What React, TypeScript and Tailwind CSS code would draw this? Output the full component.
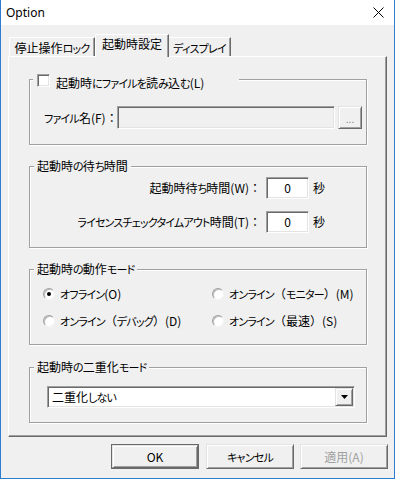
import React from "react";

const JP = "font-['Noto_Sans_CJK_JP',sans-serif] [font-feature-settings:'palt'] text-[12px] leading-[16px] text-black";

const sunken =
  "border border-t-[#a0a0a0] border-l-[#a0a0a0] border-r-white border-b-white shadow-[inset_1px_1px_0_#696969,inset_-1px_-1px_0_#e3e3e3]";
const raised =
  "border border-t-[#e3e3e3] border-l-[#e3e3e3] border-r-[#696969] border-b-[#696969] shadow-[inset_1px_1px_0_#fff,inset_-1px_-1px_0_#a0a0a0]";

// Renders Japanese text with narrower kana (like Meiryo UI) and full-width punctuation.
function T({ s }: { s: string }) {
  const parts = s.split(/([\u3041-\u309F\u30A0-\u30FF]+|[（）：]+)/).filter((p) => p.length > 0);
  return (
    <span className="whitespace-nowrap">
      {parts.map((p, i) => {
        if (/^[\u3041-\u309F\u30A0-\u30FF]+$/.test(p)) {
          return (
            <span key={i} className="text-[11px] tracking-[-0.8px]">
              {p}
            </span>
          );
        }
        if (/^[（）：]+$/.test(p)) {
          return (
            <span key={i} className="[font-feature-settings:normal]">
              {p}
            </span>
          );
        }
        return <span key={i}>{p}</span>;
      })}
    </span>
  );
}

function Group({
  h,
  mt,
  legend,
  children,
}: {
  h: string;
  mt: string;
  legend: React.ReactNode;
  children: React.ReactNode;
}) {
  return (
    <div
      className={`relative w-[338px] ${h} ${mt} border border-[#a0a0a0] shadow-[inset_1px_1px_0_#fff,1px_1px_0_#fff]`}
    >
      {legend}
      {children}
    </div>
  );
}

function Legend({ text }: { text: string }) {
  return (
    <div className="absolute left-[4px] top-[-9px] bg-[#f0f0f0] px-[3px] whitespace-nowrap">
      <T s={text} />
    </div>
  );
}

function Radio({ checked, label }: { checked?: boolean; label: string }) {
  return (
    <div className="flex items-center h-[16px]">
      <div className="relative w-[12px] h-[12px] rounded-full bg-white border border-t-[#a0a0a0] border-l-[#a0a0a0] border-r-[#f4f4f4] border-b-[#f4f4f4] shadow-[inset_1px_1px_0_#bdbdbd] flex items-center justify-center">
        {checked && <div className="w-[4px] h-[4px] rounded-full bg-black" />}
      </div>
      <span className="ml-[5px] whitespace-nowrap">
        <T s={label} />
      </span>
    </div>
  );
}

export default function App() {
  return (
    <div className={`w-[395px] h-[479px] bg-[#f0f0f0] border-x border-b border-[#2d7dd2] flex flex-col ${JP}`}>
      {/* title bar */}
      <div className="h-[25px] bg-white flex items-center justify-between pl-[5px] pr-[10px]">
        <span className="font-['Noto_Sans',sans-serif] text-[12px] leading-[16px] text-black">Option</span>
        <svg width="11" height="11" viewBox="0 0 11 11">
          <path d="M0.5 0.5 L10.5 10.5 M10.5 0.5 L0.5 10.5" stroke="#000" strokeWidth="1" />
        </svg>
      </div>

      {/* client */}
      <div className="px-[7px] pt-[9px]">
        {/* tabs */}
        <div className="relative z-10 flex items-end h-[22px] pl-[1px]">
          <div className="w-[86px] h-[19px] border-t border-l border-white border-r border-r-[#696969] shadow-[inset_-1px_0_0_#a0a0a0] flex items-center justify-center pt-[1px] whitespace-nowrap">
            <T s="停止操作ロック" />
          </div>
          <div className="w-[74px] h-[23px] -mb-px bg-[#f0f0f0] border-t border-l border-white border-r border-r-[#696969] shadow-[inset_-1px_0_0_#a0a0a0] flex items-start justify-center pt-[1px] whitespace-nowrap">
            <T s="起動時設定" />
          </div>
          <div className="w-[62px] h-[19px] border-t border-white border-r border-r-[#696969] shadow-[inset_-1px_0_0_#a0a0a0] flex items-center justify-center pt-[1px] whitespace-nowrap">
            <T s="ディスプレイ" />
          </div>
        </div>

        {/* panel */}
        <div className="h-[381px] border border-t-white border-l-white border-r-[#696969] border-b-[#696969] shadow-[inset_-1px_-1px_0_#a0a0a0] pl-[20px] pt-[22px]">
          {/* group 1 */}
          <Group
            h="h-[66px]"
            mt="mt-0"
            legend={
              <div className="absolute left-[3px] top-[-4px] w-[206px] h-[14px] bg-[#f0f0f0] pl-[4px] flex items-start">
                <div className="mt-[-2px] w-[13px] h-[13px] bg-white border border-t-[#a0a0a0] border-l-[#a0a0a0] border-r-white border-b-white shadow-[inset_1px_1px_0_#696969,inset_-1px_-1px_0_#e3e3e3]" />
                <span className="ml-[6px] -mt-[1px] whitespace-nowrap">
                  <T s="起動時にファイルを読み込む(L)" />
                </span>
              </div>
            }
          >
            <div className="flex items-center pt-[26px] pl-[14px]">
              <span className="w-[73px] whitespace-nowrap">
                <T s="ファイル名(F)：" />
              </span>
              <div className={`w-[218px] h-[23px] bg-[#f0f0f0] ${sunken}`} />
              <div className={`ml-[3px] w-[24px] h-[23px] ${raised} flex items-center justify-center text-[#838383] text-[10px] leading-[10px] pt-[2px]`}>
                ...
              </div>
            </div>
          </Group>

          {/* group 2 */}
          <Group h="h-[82px]" mt="mt-[21px]" legend={<Legend text="起動時の待ち時間" />}>
            <div className="pt-[10px] flex flex-col gap-[12px]">
              <div className="flex items-center h-[22px]">
                <span className="w-[231px] text-right whitespace-nowrap">
                  <T s="起動時待ち時間(W)：" />
                </span>
                <div className={`ml-[5px] w-[43px] h-[22px] bg-white ${sunken} flex items-center justify-center`}>0</div>
                <span className="ml-[4px]">秒</span>
              </div>
              <div className="flex items-center h-[22px]">
                <span className="w-[231px] text-right whitespace-nowrap">
                  <T s="ライセンスチェックタイムアウト時間(T)：" />
                </span>
                <div className={`ml-[5px] w-[43px] h-[22px] bg-white ${sunken} flex items-center justify-center`}>0</div>
                <span className="ml-[4px]">秒</span>
              </div>
            </div>
          </Group>

          {/* group 3 */}
          <Group h="h-[76px]" mt="mt-[21px]" legend={<Legend text="起動時の動作モード" />}>
            <div className="pt-[16px] pl-[13px] grid grid-cols-[169px_1fr] gap-y-[11px]">
              <Radio checked label="オフライン(O)" />
              <Radio label="オンライン（モニター）(M)" />
              <Radio label="オンライン（デバッグ）(D)" />
              <Radio label="オンライン（最速）(S)" />
            </div>
          </Group>

          {/* group 4 */}
          <Group h="h-[56px]" mt="mt-[22px]" legend={<Legend text="起動時の二重化モード" />}>
            <div className="pt-[18px] pl-[17px]">
              <div className={`w-[308px] h-[22px] bg-white ${sunken} flex items-center justify-between pl-[4px] pr-[1px]`}>
                <T s="二重化しない" />
                <div className={`w-[18px] h-[18px] bg-[#f0f0f0] ${raised} flex items-center justify-center`}>
                  <svg width="7" height="4" viewBox="0 0 7 4">
                    <path d="M0 0 H7 L3.5 4 Z" fill="#000" />
                  </svg>
                </div>
              </div>
            </div>
          </Group>
        </div>
      </div>

      {/* buttons */}
      <div className="flex pl-[110px] mt-[7px]">
        <div className="w-[88px] h-[25px] border border-[#696969]">
          <div className={`w-full h-full ${raised} flex items-center justify-center`}>OK</div>
        </div>
        <div className={`ml-[7px] w-[88px] h-[25px] ${raised} flex items-center justify-center`}>
          <T s="キャンセル" />
        </div>
        <div className={`ml-[6px] w-[88px] h-[25px] ${raised} flex items-center justify-center text-[#a0a0a0]`}>
          <T s="適用(A)" />
        </div>
      </div>
    </div>
  );
}
